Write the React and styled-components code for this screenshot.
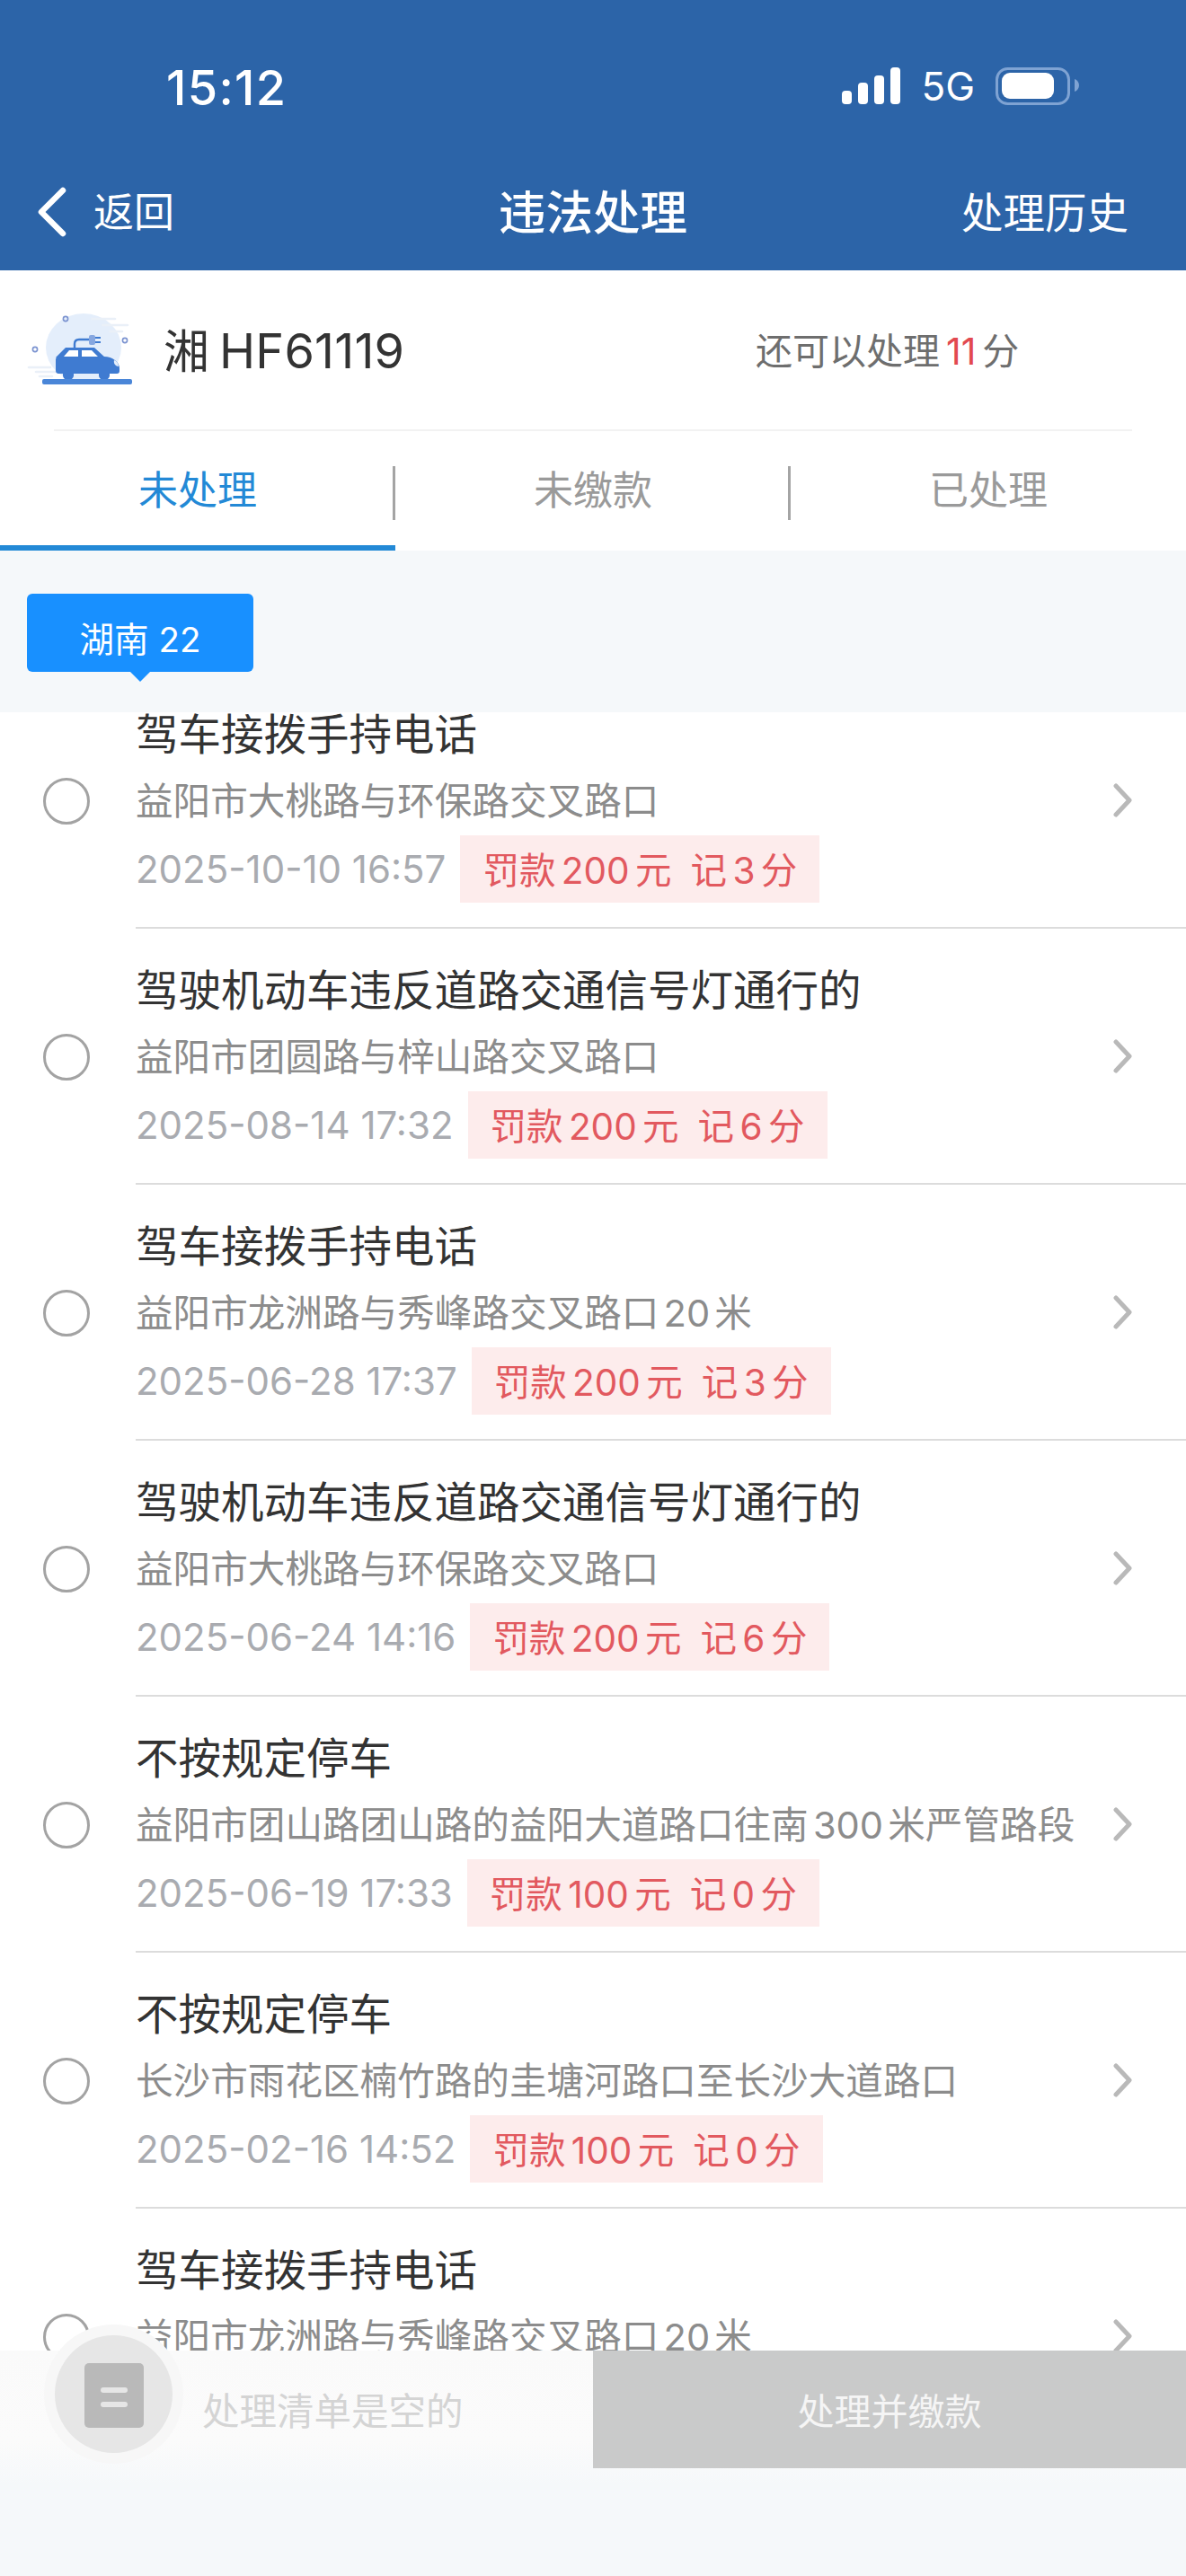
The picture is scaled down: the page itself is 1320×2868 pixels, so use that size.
import React from "react";
import styled, { createGlobalStyle } from "styled-components";

const Global = createGlobalStyle`
  html, body { margin: 0; padding: 0; background: #f5f8fa; }
  * { box-sizing: border-box; }
  body { font-family: Inter, "Noto Sans CJK SC", sans-serif; }
`;

const Page = styled.div`
  width: 1320px;
  height: 2868px;
  display: flex;
  flex-direction: column;
  background: #f5f8fa;
  overflow: hidden;
  position: relative;
`;

const Header = styled.header`
  height: 301px;
  flex: none;
  background: #2c64a8;
  color: #fff;
  display: flex;
  flex-direction: column;
`;
const StatusBar = styled.div`
  height: 195px;
  padding: 66px 119px 0 185px;
  display: flex;
  justify-content: space-between;
  align-items: flex-start;
`;
const Clock = styled.span`
  font: 500 54px/64px Inter, sans-serif;
  letter-spacing: 1.3px;
`;
const StatusIcons = styled.div`
  display: flex;
  align-items: center;
  height: 52px;
  gap: 23px;
  margin-top: 4px;
`;
const NetLabel = styled.span`
  font: 400 44px/46px Inter, sans-serif;
`;
const NavBar = styled.div`
  flex: 1;
  display: grid;
  grid-template-columns: 1fr auto 1fr;
  align-items: center;
  padding: 0 64px 30px 64px;
`;
const Back = styled.div`
  display: flex;
  align-items: center;
  gap: 30px;
  margin-left: -24px;
  font-size: 45px;
`;
const BackArrow = styled.svg`
  width: 34px;
  height: 56px;
  margin-top: 5px;
`;
const NavTitle = styled.div`
  font-size: 52.5px;
  font-weight: 500;
`;
const NavAction = styled.div`
  font-size: 46.5px;
  justify-self: end;
`;

const CarPanel = styled.section`
  height: 312px;
  flex: none;
  background: #fff;
  display: flex;
  flex-direction: column;
`;
const CarRow = styled.div`
  height: 177px;
  flex: none;
  margin-left: 30px;
  display: flex;
  align-items: center;
  padding-bottom: 3px;
`;
const CarIcon = styled.svg`
  width: 120px;
  height: 80px;
  flex: none;
`;
const Plate = styled.div`
  margin-left: 32px;
  font-size: 51px;
  color: #333;
  width: 659px;
`;
const PlateNumber = styled.span`
  margin-left: 11px;
  font-size: 54px;
  letter-spacing: 0.2px;
`;
const Quota = styled.div`
  font-size: 41px;
  color: #6e6e6e;
`;
const QuotaNum = styled.span`
  color: #e2494f;
  margin: 0 7px;
`;
const CarDivider = styled.div`
  height: 2px;
  flex: none;
  margin: 0 60px;
  background: #f2f2f2;
`;
const Tabs = styled.nav`
  flex: 1;
  display: grid;
  grid-template-columns: repeat(3, 1fr);
`;
const Tab = styled.div`
  position: relative;
  display: flex;
  align-items: center;
  justify-content: center;
  padding-bottom: 1px;
  font-size: 44px;
  color: ${(p) => (p.$active ? "#2389d6" : "#9a9a9a")};
  border-bottom: 6px solid ${(p) => (p.$active ? "#2389d6" : "transparent")};
  &:not(:last-child)::after {
    content: "";
    position: absolute;
    right: 0;
    top: 39px;
    width: 3px;
    height: 60px;
    background: #a4a4a4;
  }
`;

const ProvinceBar = styled.div`
  height: 180px;
  flex: none;
  background: #f5f8fa;
  padding: 48px 0 0 30px;
`;
const ProvinceTag = styled.div`
  position: relative;
  width: 252px;
  height: 87px;
  padding-top: 8px;
  border-radius: 6px;
  background: #1890ff;
  color: #fff;
  font-size: 38.5px;
  display: flex;
  align-items: center;
  justify-content: center;
  &::after {
    content: "";
    position: absolute;
    left: 115px;
    bottom: -11px;
    border-left: 11px solid transparent;
    border-right: 11px solid transparent;
    border-top: 11px solid #1890ff;
  }
`;

const List = styled.div`
  flex: 1;
  min-height: 0;
  overflow: hidden;
  background: #fff;
`;
const ListInner = styled.div`
  margin-top: -44px;
`;
const Row = styled.article`
  height: 285px;
  display: flex;
  align-items: center;
`;
const Radio = styled.span`
  width: 52px;
  height: 52px;
  flex: none;
  margin: 0 51px 0 48px;
  border-radius: 50%;
  border: 3px solid #a3a3a3;
`;
const RowBody = styled.div`
  flex: 1;
  height: 100%;
  border-bottom: 2px solid #dcdcdc;
  display: flex;
  align-items: center;
  padding-right: 58px;
`;
const RowText = styled.div`
  flex: 1;
  display: flex;
  flex-direction: column;
  padding-top: 10px;
`;
const RowTitle = styled.div`
  font-size: 47.5px;
  line-height: 64px;
  color: #333;
`;
const RowAddress = styled.div`
  font-size: 41.6px;
  line-height: 56px;
  margin-top: 14px;
  color: #8c8c8c;
  word-spacing: -6.5px;
`;
const RowMeta = styled.div`
  display: flex;
  align-items: center;
  min-height: 75px;
  margin-top: 10px;
`;
const RowDate = styled.span`
  font-size: 42px;
  color: #a9abb0;
  margin-right: 16px;
`;
const Fine = styled.span`
  height: 75px;
  padding: 0 25px 3px;
  display: inline-flex;
  align-items: center;
  gap: 21px;
  background: #fdecec;
  color: #e2595f;
  font-size: 40.5px;
  word-spacing: -5px;
`;
const Chevron = styled.svg`
  width: 24px;
  height: 38px;
  flex: none;
`;

const Footer = styled.footer`
  position: relative;
  height: 251px;
  flex: none;
  background: linear-gradient(#fafafa 0, #fbfbfb 100px, #f5f8fa 150px);
  display: flex;
  align-items: flex-start;
`;
const CartHalo = styled.div`
  position: absolute;
  left: 49px;
  top: -29px;
  width: 155px;
  height: 155px;
  border-radius: 50%;
  background: #f7f7f7;
  display: flex;
  align-items: center;
  justify-content: center;
`;
const CartCircle = styled.div`
  width: 131px;
  height: 131px;
  border-radius: 50%;
  background: #e6e6e6;
  display: flex;
  align-items: center;
  justify-content: center;
`;
const CartIcon = styled.svg`
  width: 66px;
  height: 72px;
  margin-top: 2px;
`;
const EmptyText = styled.div`
  width: 660px;
  height: 131px;
  padding: 40px 0 0 225px;
  font-size: 41.5px;
  line-height: 56px;
  color: #d4d4d4;
`;
const PayButton = styled.div`
  flex: 1;
  height: 131px;
  background: #c9caca;
  color: #f5f5f5;
  font-size: 41px;
  line-height: 56px;
  padding-top: 40px;
  text-align: center;
`;

const items = [
  { title: "驾车接拨手持电话", address: "益阳市大桃路与环保路交叉路口", date: "2025-10-10 16:57", money: "200", points: "3" },
  { title: "驾驶机动车违反道路交通信号灯通行的", address: "益阳市团圆路与梓山路交叉路口", date: "2025-08-14 17:32", money: "200", points: "6" },
  { title: "驾车接拨手持电话", address: "益阳市龙洲路与秀峰路交叉路口 20 米", date: "2025-06-28 17:37", money: "200", points: "3" },
  { title: "驾驶机动车违反道路交通信号灯通行的", address: "益阳市大桃路与环保路交叉路口", date: "2025-06-24 14:16", money: "200", points: "6" },
  { title: "不按规定停车", address: "益阳市团山路团山路的益阳大道路口往南 300 米严管路段", date: "2025-06-19 17:33", money: "100", points: "0" },
  { title: "不按规定停车", address: "长沙市雨花区楠竹路的圭塘河路口至长沙大道路口", date: "2025-02-16 14:52", money: "100", points: "0" },
  { title: "驾车接拨手持电话", address: "益阳市龙洲路与秀峰路交叉路口 20 米" },
];

const Signal = () => (
  <svg width="65" height="42" viewBox="0 0 65 42" fill="#fff">
    <rect x="0" y="26" width="11" height="15" rx="4" />
    <rect x="18" y="17" width="11" height="24" rx="4" />
    <rect x="36" y="9" width="11" height="32" rx="4" />
    <rect x="54" y="0" width="11" height="41" rx="4" />
  </svg>
);

const Battery = () => (
  <svg width="93" height="42" viewBox="0 0 93 42">
    <rect x="1.5" y="1.5" width="80" height="39" rx="12" fill="none" stroke="#7fa3d3" strokeWidth="3" />
    <rect x="7" y="6" width="58" height="29" rx="9" fill="#fff" />
    <path d="M88 13c3 1 5 4 5 7s-2 6-5 7z" fill="#7fa3d3" />
  </svg>
);

const CarGlyph = () => (
  <CarIcon viewBox="0 0 120 80">
    <ellipse cx="63" cy="39" rx="42" ry="38" fill="#e4eefb" />
    <g stroke="#eaf0f8" strokeWidth="2.5" strokeLinecap="round">
      <path d="M72 7h26M84 14h28M92 21h14" />
      <path d="M2 61h24M10 66h22M14 71h14" />
    </g>
    <g fill="none" stroke="#7b93d0" strokeWidth="1.6">
      <circle cx="43" cy="7" r="2.6" />
      <circle cx="109" cy="31" r="2.6" />
      <circle cx="9" cy="41" r="2.6" />
    </g>
    <path d="M53 41v-6c0-3 2-5 5-5h12" fill="none" stroke="#3f7bd1" strokeWidth="2.4" />
    <rect x="69" y="25" width="7" height="11" rx="2" fill="#86a7e0" />
    <path d="M76 28h6M76 33h6" stroke="#3f7bd1" strokeWidth="2.2" />
    <path d="M32 50l11-11h32l12 11z" fill="#3f7bd1" />
    <path d="M41 49l6-7h10v7zM61 42h11l7 7H61z" fill="#fff" />
    <path d="M36 49h50c9 0 17 6 17 13v3c0 2-1 3-3 3H36c-3 0-4-1-4-4V53c0-3 1-4 4-4z" fill="#3f7bd1" />
    <path d="M97 53c3 1 5 4 5 7-3 0-6-3-5-7z" fill="#e4eefb" />
    <path d="M40 67h12v3c0 3-3 5-6 5s-6-2-6-5zM80 67h12v3c0 3-3 5-6 5s-6-2-6-5z" fill="#3f7bd1" />
    <rect x="17" y="74" width="100" height="6" rx="2" fill="#4a86d8" />
  </CarIcon>
);

export default function App() {
  return (
    <Page>
      <Global />
      <Header>
        <StatusBar>
          <Clock>15:12</Clock>
          <StatusIcons>
            <Signal />
            <NetLabel>5G</NetLabel>
            <Battery />
          </StatusIcons>
        </StatusBar>
        <NavBar>
          <Back>
            <BackArrow viewBox="0 0 34 56" fill="none">
              <path d="M30 4L6 28l24 24" stroke="#fff" strokeWidth="6.5" strokeLinecap="round" strokeLinejoin="round" />
            </BackArrow>
            返回
          </Back>
          <NavTitle>违法处理</NavTitle>
          <NavAction>处理历史</NavAction>
        </NavBar>
      </Header>

      <CarPanel>
        <CarRow>
          <CarGlyph />
          <Plate>
            湘<PlateNumber>HF61119</PlateNumber>
          </Plate>
          <Quota>
            还可以处理<QuotaNum>11</QuotaNum>分
          </Quota>
        </CarRow>
        <CarDivider />
        <Tabs>
          <Tab $active>未处理</Tab>
          <Tab>未缴款</Tab>
          <Tab>已处理</Tab>
        </Tabs>
      </CarPanel>

      <ProvinceBar>
        <ProvinceTag>湖南 22</ProvinceTag>
      </ProvinceBar>

      <List>
        <ListInner>
          {items.map((item, i) => (
            <Row key={i}>
              <Radio />
              <RowBody>
                <RowText>
                  <RowTitle>{item.title}</RowTitle>
                  <RowAddress>{item.address}</RowAddress>
                  <RowMeta>
                    {item.date && (
                      <>
                        <RowDate>{item.date}</RowDate>
                        <Fine>
                          <span>罚款 {item.money} 元</span>
                          <span>记 {item.points} 分</span>
                        </Fine>
                      </>
                    )}
                  </RowMeta>
                </RowText>
                <Chevron viewBox="0 0 24 38" fill="none">
                  <path d="M4 3l15 16L4 35" stroke="#b9b9b9" strokeWidth="5" strokeLinecap="round" strokeLinejoin="round" />
                </Chevron>
              </RowBody>
            </Row>
          ))}
        </ListInner>
      </List>

      <Footer>
        <EmptyText>处理清单是空的</EmptyText>
        <PayButton>处理并缴款</PayButton>
        <CartHalo>
          <CartCircle>
            <CartIcon viewBox="0 0 66 72">
              <rect width="66" height="72" rx="5" fill="#b9b9b9" />
              <rect x="18" y="27" width="30" height="6" rx="3" fill="#e6e6e6" />
              <rect x="18" y="43" width="30" height="6" rx="3" fill="#e6e6e6" />
            </CartIcon>
          </CartCircle>
        </CartHalo>
      </Footer>
    </Page>
  );
}
